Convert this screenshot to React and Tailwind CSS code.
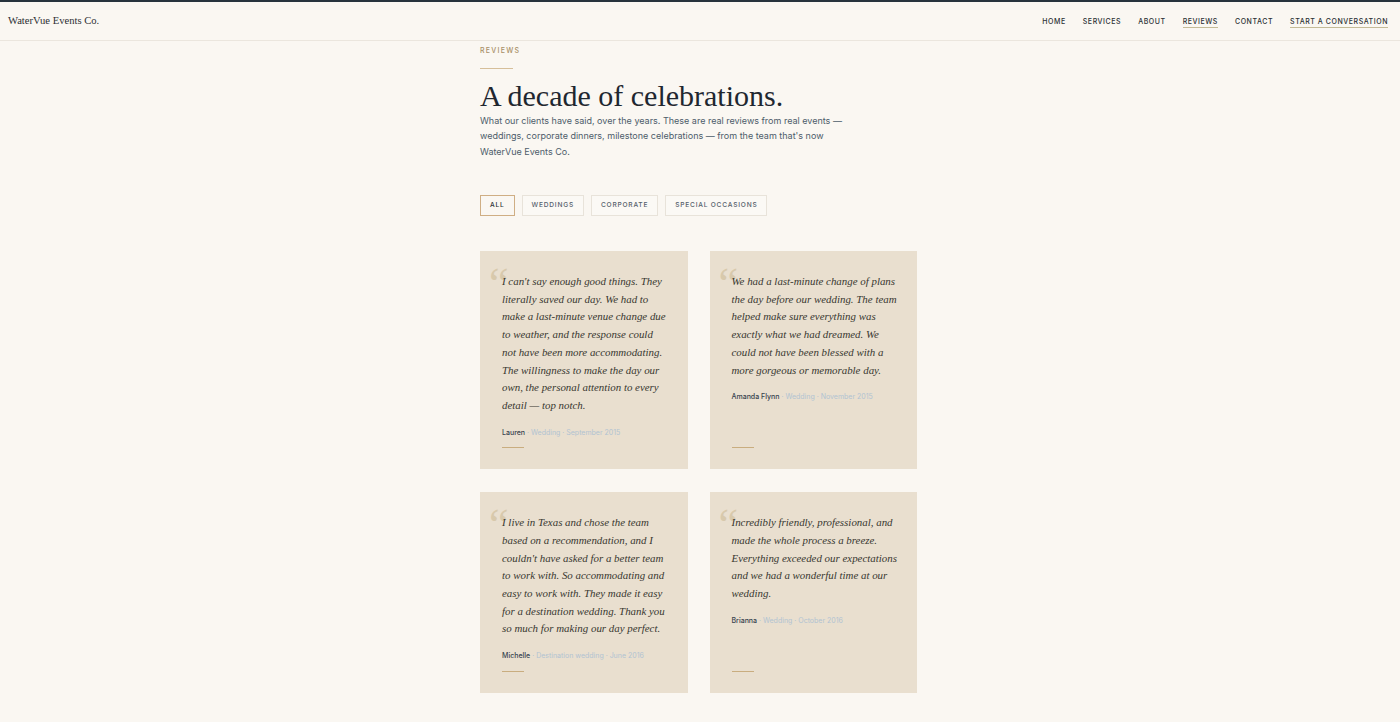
import { useState } from 'react';

const NAV = ['Home', 'Services', 'About', 'Reviews', 'Contact', 'Start a Conversation'];
const FILTERS = ['All', 'Weddings', 'Corporate', 'Special Occasions'];

const REVIEWS = [
    {
        lines: [
            "I can't say enough good things. They",
            'literally saved our day. We had to',
            'make a last-minute venue change due',
            'to weather, and the response could',
            'not have been more accommodating.',
            'The willingness to make the day our',
            'own, the personal attention to every',
            'detail — top notch.',
        ],
        name: 'Lauren',
        meta: 'Wedding · September 2015',
    },
    {
        lines: [
            'We had a last-minute change of plans',
            'the day before our wedding. The team',
            'helped make sure everything was',
            'exactly what we had dreamed. We',
            'could not have been blessed with a',
            'more gorgeous or memorable day.',
        ],
        name: 'Amanda Flynn',
        meta: 'Wedding · November 2015',
    },
    {
        lines: [
            'I live in Texas and chose the team',
            'based on a recommendation, and I',
            "couldn't have asked for a better team",
            'to work with. So accommodating and',
            'easy to work with. They made it easy',
            'for a destination wedding. Thank you',
            'so much for making our day perfect.',
        ],
        name: 'Michelle',
        meta: 'Destination wedding · June 2016',
    },
    {
        lines: [
            'Incredibly friendly, professional, and',
            'made the whole process a breeze.',
            'Everything exceeded our expectations',
            'and we had a wonderful time at our',
            'wedding.',
        ],
        name: 'Brianna',
        meta: 'Wedding · October 2016',
    },
];

const serif = "font-['Liberation_Serif',serif]";
const sans = "font-['Inter',sans-serif]";

const ReviewCard = ({ review }) => (
    <div className="relative flex flex-col bg-[#e9dfcf] px-[22px] pt-[22px] pb-[21px]">
        <span
            aria-hidden="true"
            className={`${serif} absolute left-[9px] top-[11px] text-[44px] leading-none text-[#d8c9ac]`}
        >
            “
        </span>
        <p className={`${serif} relative italic text-[10.9px] leading-[17.7px] text-[#38372f]`}>
            {review.lines.map((line, i) => (
                <span key={i} className="block whitespace-nowrap">{line}</span>
            ))}
        </p>
        <p className={`${sans} mt-[13px] text-[7px] text-[#b1c3d2]`}>
            <span className="font-medium text-[#37434e]">{review.name}</span>
            {' · '}{review.meta}
        </p>
        <div className="mt-auto pt-[9px]">
            <div className="h-px w-[22px] bg-[#c9ad7f]" />
        </div>
    </div>
);

const App = () => {
    const [active, setActive] = useState('All');

    return (
        <div className={`${sans} min-h-screen bg-[#faf7f2] border-t-2 border-[#27333d]`}>
            <header className="flex h-[39px] items-center justify-between border-b border-[#ebe6de] pl-2 pr-3">
                <span className={`${serif} text-[10.6px] text-[#2c2f33]`}>WaterVue Events Co.</span>
                <nav className="mt-[2px] flex items-center gap-[17px]">
                    {NAV.map(item => {
                        const underlined = item === 'Reviews' || item === 'Start a Conversation';
                        return (
                            <a
                                key={item}
                                className={`text-[7px] leading-[9px] font-medium uppercase tracking-[0.08em] text-[#2b3035] pb-[1px] border-b ${underlined ? 'border-[#c4bb97]' : 'border-transparent'}`}
                            >
                                {item}
                            </a>
                        );
                    })}
                </nav>
            </header>

            <main className="mx-auto w-[440px] pt-[5px] pb-8">
                <p className="text-[7px] font-medium uppercase tracking-[0.18em] text-[#a88f67]">Reviews</p>
                <div className="mt-[11px] h-px w-[33px] bg-[#d6bf9a]" />
                <h1 className={`${serif} mt-[11px] text-[30px] leading-[32px] text-[#1f2730]`}>
                    A decade of celebrations.
                </h1>
                <p className="mt-[1px] w-[362px] text-[9px] leading-[15.5px] text-[#4d5c6a]">
                    What our clients have said, over the years. These are real reviews from real events —
                    weddings, corporate dinners, milestone celebrations — from the team that's now
                    WaterVue Events Co.
                </p>

                <div className="mt-[36px] flex gap-[7px]">
                    {FILTERS.map(f => (
                        <button
                            key={f}
                            onClick={() => setActive(f)}
                            className={`h-[21px] px-[9px] text-[6.6px] font-medium uppercase tracking-[0.12em] border ${active === f ? 'border-[#cfae84] text-[#2b3035]' : 'border-[#e8e3da] bg-[#fbf9f5] text-[#55606b]'}`}
                        >
                            {f}
                        </button>
                    ))}
                </div>

                <div className="mt-[35px] grid w-[437px] grid-cols-2 gap-x-[22px] gap-y-[23px]">
                    {REVIEWS.map((r, i) => (
                        <ReviewCard key={i} review={r} />
                    ))}
                </div>
            </main>
        </div>
    );
};

export default App;
